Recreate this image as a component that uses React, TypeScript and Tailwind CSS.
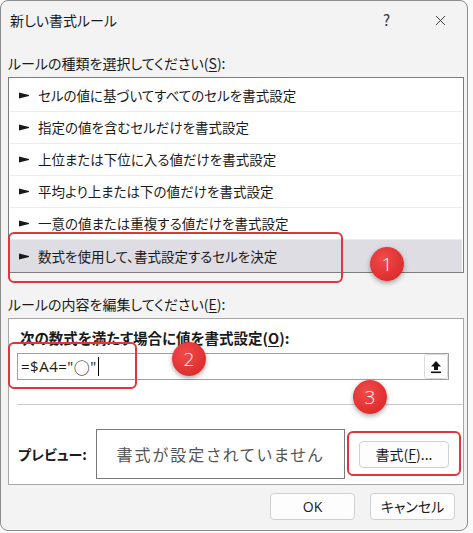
import { X } from 'lucide-react'

const RULES = [
  'セルの値に基づいてすべてのセルを書式設定',
  '指定の値を含むセルだけを書式設定',
  '上位または下位に入る値だけを書式設定',
  '平均より上または下の値だけを書式設定',
  '一意の値または重複する値だけを書式設定',
  '数式を使用して、書式設定するセルを決定',
]

const SELECTED = 5

function Pointer() {
  return (
    <svg width="10" height="7" viewBox="0 0 10 7" className="shrink-0">
      <polygon points="0,0.5 10,3 10,4 0,6.5" fill="#1a1a1a" />
    </svg>
  )
}

function UploadIcon() {
  return (
    <svg width="12" height="14" viewBox="0 0 12 14">
      <polygon points="6,1 11,6.5 8,6.5 8,10 4,10 4,6.5 1,6.5" fill="#111" />
      <rect x="1" y="11.5" width="10" height="1.6" fill="#111" />
    </svg>
  )
}

// numbered red marker laid over the dialog
function Badge({ n, className }: { n: number; className: string }) {
  return (
    <div
      className={`absolute w-[34px] h-[34px] rounded-full bg-[radial-gradient(circle_at_40%_35%,#f24a4a,#d62222)] shadow-[0_2px_5px_rgba(0,0,0,0.35)] flex items-center justify-center text-white text-[19px] font-light font-['Open_Sans',sans-serif] ${className}`}
    >
      {n}
    </div>
  )
}

function Key({ k }: { k: string }) {
  return (
    <>
      (<span className="underline underline-offset-2">{k}</span>)
    </>
  )
}

export default function App() {
  return (
    <div className="w-[473px] h-[533px] bg-[#fafafa] font-['Noto_Sans_CJK_JP',sans-serif] [font-feature-settings:'palt'] text-[#1a1a1a]">
      <div className="relative w-[468px] h-[531px] rounded-lg border border-[#8c8c8c] bg-[#f3f3f3] flex flex-col">
        {/* title bar */}
        <div className="h-[39px] flex items-center pl-[9px] pr-[18px]">
          <span className="text-[14px] flex-1">新しい書式ルール</span>
          <span className="text-[15px] mr-[42px] text-[#333]">?</span>
          <X size={17} strokeWidth={1.2} className="text-[#222]" />
        </div>

        <div className="mt-[13px] h-[20px] pl-[7px] text-[14px] leading-[20px]">
          ルールの種類を選択してください<Key k="S" />:
        </div>

        {/* rule type list */}
        <div className="mt-[4px] ml-[7px] w-[456px] h-[196px] border border-[#7c7c7c] bg-white pt-[2px] px-[1px] flex flex-col">
          {RULES.map((r, i) => (
            <div
              key={r}
              className={`h-[32px] flex items-center gap-[9px] pl-[9px] text-[13.5px] ${
                i === SELECTED ? 'bg-[#dedde3]' : 'border-b border-[#ececec]'
              }`}
            >
              <Pointer />
              <span>{r}</span>
            </div>
          ))}
        </div>

        <div className="mt-[21px] h-[20px] pl-[7px] text-[14px] leading-[20px]">
          ルールの内容を編集してください<Key k="E" />:
        </div>

        {/* rule description panel */}
        <div className="mt-[4px] ml-[7px] w-[456px] h-[167px] border border-[#a8a8a8] bg-white flex flex-col">
          <div className="mt-[9px] pl-[11px] h-[20px] leading-[20px] text-[14.5px] font-bold">
            次の数式を満たす場合に値を書式設定<Key k="O" />:
          </div>
          <div className="mt-[5px] ml-[8px] w-[432px] h-[27px] border border-[#a0a0a0] flex items-center">
            <span className="pl-[3px] text-[15px] tracking-[0.5px] font-['Open_Sans',sans-serif] flex-1 flex items-center">
              =$A4="<span className="font-['Noto_Sans_CJK_JP',sans-serif] text-[16px] leading-none">○</span>"
              <span className="inline-block w-px h-[19px] bg-black ml-[1px]" />
            </span>
            <div className="w-[24px] h-[25px] rounded-[3px] border border-[#dadada] bg-white flex items-center justify-center">
              <UploadIcon />
            </div>
          </div>
          <div className="mt-[24px] ml-[8px] h-px bg-[#c8c8c8]" />
          <div className="mt-[24px] flex items-center pl-[9px]">
            <span className="w-[78px] text-[14px] font-bold">プレビュー:</span>
            <div className="w-[249px] h-[50px] border border-[#7a7a7a] flex items-center justify-center text-[16px] tracking-[2px] text-[#555]">
              書式が設定されていません
            </div>
            <button className="ml-[14px] w-[90px] h-[27px] rounded-[4px] border border-[#d0d0d0] bg-[#fdfdfd] text-[14px]">
              書式<Key k="F" />...
            </button>
          </div>
        </div>

        {/* dialog buttons */}
        <div className="mt-[8px] flex justify-end gap-[15px] pr-[12px]">
          <button className="w-[85px] h-[27px] rounded-[4px] border border-[#d0d0d0] bg-[#fdfdfd] text-[14px] font-['Open_Sans',sans-serif]">
            OK
          </button>
          <button className="w-[85px] h-[27px] rounded-[4px] border border-[#d0d0d0] bg-[#fdfdfd] text-[14px]">
            キャンセル
          </button>
        </div>

        {/* annotations */}
        <div className="absolute left-[7px] top-[231px] w-[335px] h-[51px] rounded-[6px] border-2 border-[#e0363b]" />
        <Badge n={1} className="left-[369px] top-[246px]" />
        <div className="absolute left-[7px] top-[341px] w-[129px] h-[47px] rounded-[6px] border-2 border-[#e0363b]" />
        <Badge n={2} className="left-[171px] top-[341px]" />
        <Badge n={3} className="left-[352px] top-[379px]" />
        <div className="absolute left-[346px] top-[430px] w-[114px] h-[45px] rounded-[6px] border-2 border-[#e0363b]" />
      </div>
    </div>
  )
}
